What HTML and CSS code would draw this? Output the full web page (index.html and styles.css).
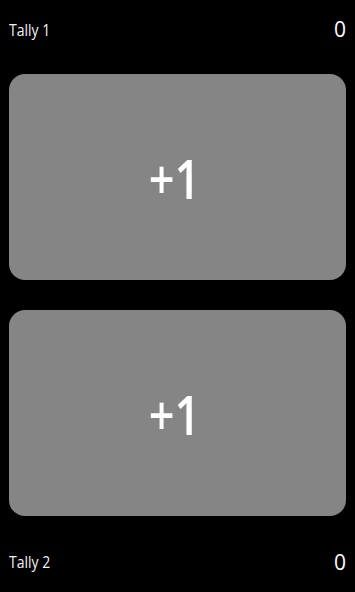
FILE: index.html
```html
<!DOCTYPE html>
<html>
<head>
<meta charset="utf-8">
<link rel="stylesheet" href="styles.css">
</head>
<body>
<div class="app">
  <div class="row row-top">
    <span class="label">Tally 1</span>
    <span class="count">0</span>
  </div>
  <div class="card card-1"><span class="plus">+1</span></div>
  <div class="card card-2"><span class="plus">+1</span></div>
  <div class="row row-bottom">
    <span class="label">Tally 2</span>
    <span class="count">0</span>
  </div>
</div>
</body>
</html>
```

FILE: styles.css
```css
html, body {
  margin: 0;
  padding: 0;
  background: #000;
}
.app {
  width: 355px;
  height: 592px;
  box-sizing: border-box;
  padding: 0 9px;
  display: flex;
  flex-direction: column;
  font-family: "Open Sans", "Noto Sans", sans-serif;
  color: #fff;
}
.row {
  display: flex;
  justify-content: space-between;
  align-items: center;
}
.row-top {
  height: 59px;
  margin-bottom: 15px;
}
.row-bottom {
  height: 60px;
  margin-top: 16px;
}
.label {
  font-size: 14px;
  line-height: 1;
  color: #f4f4f4;
  transform: scaleY(1.12);
}
.count {
  font-size: 21px;
  line-height: 1;
}
.card {
  height: 206px;
  background: #868586;
  border-radius: 16px;
  display: flex;
  align-items: center;
  justify-content: center;
}
.card-2 {
  margin-top: 30px;
}
.plus {
  display: inline-block;
  font-size: 45px;
  font-weight: 600;
  line-height: 1;
  color: #fff;
  padding-right: 6px;
  transform: scaleY(1.22);
}
```
